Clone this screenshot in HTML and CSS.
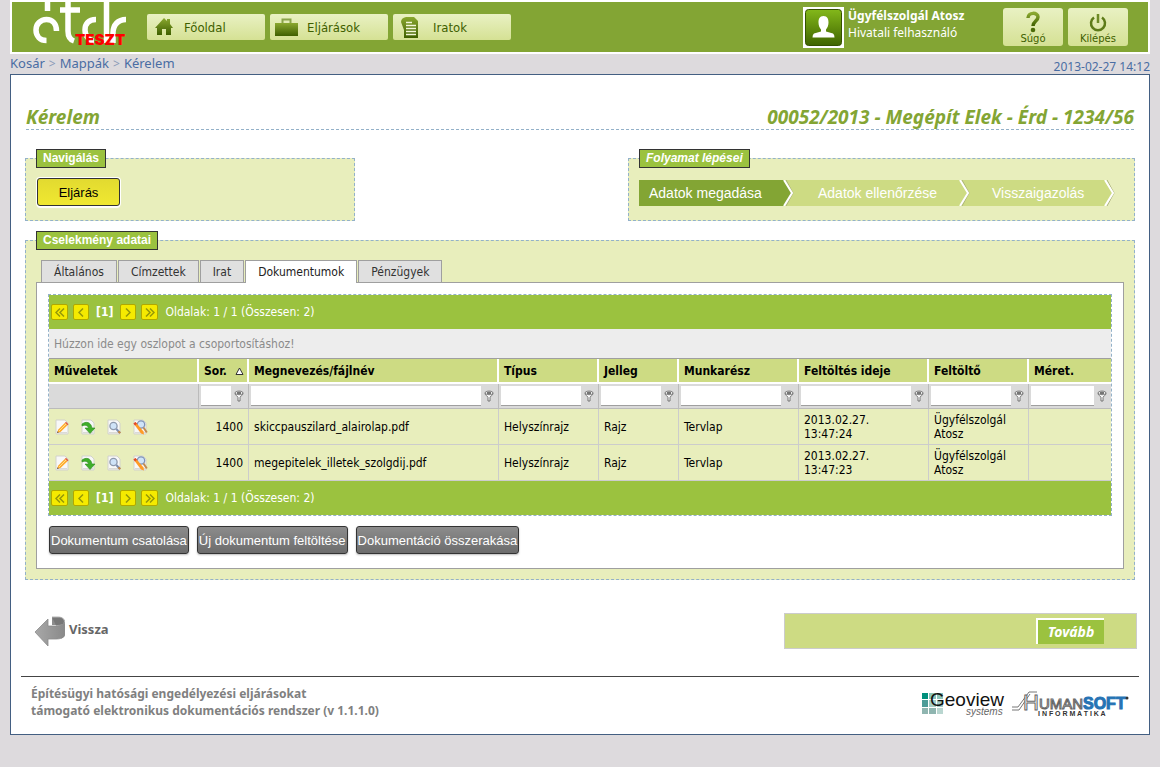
FILE: index.html
```
<!DOCTYPE html>
<html lang="hu">
<head>
<meta charset="utf-8">
<title>Kérelem</title>
<link rel="stylesheet" href="styles.css">
</head>
<body>
<svg class="defs" aria-hidden="true">
  <defs>
    <linearGradient id="leaf" x1="0" y1="0" x2="0" y2="1"><stop offset="0" stop-color="#8aa82f"/><stop offset="1" stop-color="#3f5f00"/></linearGradient>
    <linearGradient id="badge" x1="0" y1="0" x2="0" y2="1"><stop offset="0" stop-color="#83b81a"/><stop offset="1" stop-color="#3f6400"/></linearGradient>
    <linearGradient id="steel" x1="0" y1="0" x2="1" y2="0"><stop offset="0" stop-color="#a8a8a8"/><stop offset="1" stop-color="#8a8a8a"/></linearGradient>
    <symbol id="sheet" viewBox="0 0 16 16"><path d="M2 1h9l3 3v11H2z" fill="#f8f8f8" stroke="#d2d2cc"/><path d="M3 13h10v1.500H3z" fill="#dadad6"/></symbol>
    <symbol id="edit" viewBox="0 0 16 16"><use href="#sheet"/><path d="M3 14l1.300-3.500L11 3.800l2.500 2.500L6.500 13z" fill="#ffab2e"/><path d="M5 12l7-7" stroke="#ffe08a"/><path d="M11 3.800l1-1 2.500 2.500-1 1z" fill="#e05a3c"/><path d="M3 14l.6-1.800 1.200 1.200z" fill="#555"/></symbol>
    <symbol id="import" viewBox="0 0 16 16"><use href="#sheet"/><path d="M2 5c4-3 9-2 10 4h3l-5 5.500L5 9h3.500C8 6.500 5 5.500 2 7z" fill="#3fae2b" stroke="#2f8c20" stroke-width=".6"/></symbol>
    <symbol id="view" viewBox="0 0 16 16"><use href="#sheet"/><circle cx="7.500" cy="7" r="3.600" fill="#cfe3f8" stroke="#8d99ad" stroke-width="1.300"/><path d="M10.300 10l3.700 4" stroke="#7d8db0" stroke-width="2"/><path d="M12.500 12.300l1.700 1.900" stroke="#c9873a" stroke-width="2"/></symbol>
    <symbol id="review" viewBox="0 0 16 16"><use href="#sheet"/><circle cx="9" cy="5.500" r="3.700" fill="#cfe3f8" stroke="#7f93b5" stroke-width="1.300"/><path d="M11.500 8.500l3.300 5" stroke="#c08a50" stroke-width="2"/><path d="M1.500 4.500l2-1.500 8 9.500.5 3-3-1z" fill="#ff9b26"/><path d="M1.500 4.500l2-1.500 1.500 1.800-2 1.600z" fill="#e04a30"/></symbol>
    <symbol id="funnel" viewBox="0 0 10 12"><path d="M1 3.500c0 2 3 2.500 3 4V11h2V7.500c0-1.500 3-2 3-4z" fill="#fff" stroke="#666" stroke-width=".9"/><path d="M1 3c0-2.500 8-2.500 8 0s-8 2-8 0z" fill="#eee" stroke="#666" stroke-width=".9"/><path d="M3 3h4" stroke="#333" stroke-width="1.300"/></symbol>
  </defs>
</svg>

<header class="topbar">
  <a class="brand" href="#" aria-label="étdr">
    <svg class="brand-mark" width="100" height="44" viewBox="0 0 100 44" aria-hidden="true">
      <g fill="none" stroke="#fff" stroke-width="5.500">
        <path d="M17.500 0v9"/>
        <path d="M26.500 29c0-7-4-11.500-10-11.500S6 22 6 28s4 10.500 10.500 10.500"/>
        <path d="M38 0v29q0 8 6 10M30 8h20"/>
        <path d="M66 17.500c-8 0-11 5-11 10.500s4 11 9 11M76.500 0v41"/>
        <path d="M83 41V31c0-8 5-13.500 13-13.500"/>
      </g>
    </svg>
    <strong class="brand-env">TESZT</strong>
  </a>
  <nav class="menu">
    <a class="menu-item" href="#"><svg width="18" height="18" viewBox="0 0 18 18"><path d="M9 0l3 3V1h3v5l3 4h-2v7H11v-6H7v6H2v-7H0z" fill="url(#leaf)"/></svg><span>Főoldal</span></a>
    <a class="menu-item menu-wide" href="#"><svg width="23" height="18" viewBox="0 0 23 18"><path d="M0 5h23v13H0z" fill="url(#leaf)"/><path d="M7.500 5V1.500h8V5" fill="none" stroke="#8aa44a" stroke-width="2"/></svg><span>Eljárások</span></a>
    <a class="menu-item menu-doc" href="#"><svg width="18" height="21" viewBox="0 0 18 21"><path d="M5 0h8l4 4v17H3v-8L0 5q0-4 5-5z" fill="url(#leaf)"/><path d="M5 5.500h6M5 8.500h10M5 11.500h10M5 14.500h10M5 17.500h10" stroke="#f3f7d8" stroke-width="1.500"/></svg><span>Iratok</span></a>
  </nav>
  <div class="user">
    <svg class="avatar" width="41" height="41" viewBox="0 0 41 41" aria-hidden="true"><path d="M0 0h41v41H0z" fill="#fff"/><rect x="2.500" y="2.500" width="36" height="36" rx="3" fill="url(#badge)" stroke="#345200"/><path d="M20.500 9c4 0 5 3 5 6.500 0 3-1 5-2.500 7v2l7 2q1.500 1 1.500 4h-22q0-3 1.500-4l7-2v-2c-1.500-2-2.500-4-2.500-7C15.500 12 16.500 9 20.500 9z" fill="#fff"/></svg>
    <div class="user-text"><strong>Ügyfélszolgál Atosz</strong><span>Hivatali felhasználó</span></div>
  </div>
  <div class="tools">
    <a class="tool" href="#"><svg width="20" height="22" viewBox="0 0 20 22"><path d="M5 7c0-6 10-6 10-1 0 4-5 4-5 9" fill="none" stroke="url(#leaf)" stroke-width="3.500"/><circle cx="10" cy="19" r="2.300" fill="#4b6b08"/></svg><span>Súgó</span></a>
    <a class="tool" href="#"><svg width="20" height="22" viewBox="0 0 20 22"><path d="M6 6.500a7 7 0 1 0 8 0" fill="none" stroke="#5d7b18" stroke-width="2.500"/><path d="M10 3v9" stroke="#6d8a26" stroke-width="2.500"/></svg><span>Kilépés</span></a>
  </div>
</header>

<div class="trail">
  <nav class="crumbs"><a href="#">Kosár</a><i>&gt;</i><a href="#">Mappák</a><i>&gt;</i><a href="#">Kérelem</a></nav>
  <time class="clock">2013-02-27 14:12</time>
</div>

<main class="page">
  <div class="content">
    <div class="heading"><h1>Kérelem</h1><h2>00052/2013 - Megépít Elek - Érd - 1234/56</h2></div>

    <div class="pair">
      <fieldset class="group group-nav"><legend>Navigálás</legend><button class="btn btn-yellow" type="button">Eljárás</button></fieldset>
      <fieldset class="group group-steps"><legend><em>Folyamat lépései</em></legend>
        <ol class="steps">
          <li class="step step-on">Adatok megadása<svg width="11" height="26" viewBox="0 0 11 26"><path d="M0 0h1l8 13-8 13H0z" fill="#83a534"/><path d="M3 0l7 13-7 13" fill="none" stroke="#aab07c"/><path d="M1 0l8 13-8 13" fill="none" stroke="#fff" stroke-width="2"/></svg></li>
          <li class="step step-mid">Adatok ellenőrzése<svg width="11" height="26" viewBox="0 0 11 26"><path d="M3 0l7 13-7 13" fill="none" stroke="#aab07c"/><path d="M1 0l8 13-8 13" fill="none" stroke="#fff" stroke-width="2"/></svg></li>
          <li class="step step-end">Visszaigazolás<svg width="11" height="26" viewBox="0 0 11 26"><path d="M1 0h10v26H1l8-13z" fill="#e8eebc"/><path d="M3 0l7 13-7 13" fill="none" stroke="#aab07c"/><path d="M1 0l8 13-8 13" fill="none" stroke="#fff" stroke-width="2"/></svg></li>
        </ol>
      </fieldset>
    </div>

    <fieldset class="group group-main"><legend>Cselekmény adatai</legend>
      <div class="tabs" role="tablist">
        <button class="tab" type="button" role="tab">Általános</button>
        <button class="tab" type="button" role="tab">Címzettek</button>
        <button class="tab" type="button" role="tab">Irat</button>
        <button class="tab tab-on" type="button" role="tab" aria-selected="true">Dokumentumok</button>
        <button class="tab" type="button" role="tab">Pénzügyek</button>
      </div>
      <div class="pane">
        <div class="grid">
          <div class="pager">
            <button class="pg pg-wide" type="button" aria-label="Első oldal"><svg width="10" height="9" viewBox="0 0 10 9"><path d="M5 .5l-4 4 4 4M9 .5l-4 4 4 4"/></svg></button>
            <button class="pg" type="button" aria-label="Előző oldal"><svg width="6" height="9" viewBox="0 0 6 9"><path d="M5 .5l-4 4 4 4"/></svg></button>
            <strong>[1]</strong>
            <button class="pg" type="button" aria-label="Következő oldal"><svg width="6" height="9" viewBox="0 0 6 9"><path d="M1 .5l4 4-4 4"/></svg></button>
            <button class="pg pg-wide" type="button" aria-label="Utolsó oldal"><svg width="10" height="9" viewBox="0 0 10 9"><path d="M1 .5l4 4-4 4M5 .5l4 4-4 4"/></svg></button>
            <span>Oldalak: 1 / 1 (Összesen: 2)</span>
          </div>
          <div class="drop">Húzzon ide egy oszlopot a csoportosításhoz!</div>
          <table class="docs">
            <colgroup><col class="w150"><col class="w50"><col><col class="w100"><col class="w80"><col class="w120"><col class="w130"><col class="w100"><col class="w82"></colgroup>
            <thead>
              <tr class="names"><th>Műveletek</th><th><span class="sorted">Sor.<svg width="9" height="8" viewBox="0 0 9 8"><path d="M4.500 1l3.500 6.500H1z" fill="#fff" stroke="#333"/></svg></span></th><th>Megnevezés/fájlnév</th><th>Típus</th><th>Jelleg</th><th>Munkarész</th><th>Feltöltés ideje</th><th>Feltöltő</th><th>Méret.</th></tr>
              <tr class="filters">
                <td></td>
                <td><div class="filter"><input type="text" aria-label="Sor. szűrő"><button type="button" aria-label="Szűrés"><svg width="10" height="12"><use href="#funnel"/></svg></button></div></td>
                <td><div class="filter"><input type="text" aria-label="Megnevezés szűrő"><button type="button" aria-label="Szűrés"><svg width="10" height="12"><use href="#funnel"/></svg></button></div></td>
                <td><div class="filter"><input type="text" aria-label="Típus szűrő"><button type="button" aria-label="Szűrés"><svg width="10" height="12"><use href="#funnel"/></svg></button></div></td>
                <td><div class="filter"><input type="text" aria-label="Jelleg szűrő"><button type="button" aria-label="Szűrés"><svg width="10" height="12"><use href="#funnel"/></svg></button></div></td>
                <td><div class="filter"><input type="text" aria-label="Munkarész szűrő"><button type="button" aria-label="Szűrés"><svg width="10" height="12"><use href="#funnel"/></svg></button></div></td>
                <td><div class="filter"><input type="text" aria-label="Feltöltés ideje szűrő"><button type="button" aria-label="Szűrés"><svg width="10" height="12"><use href="#funnel"/></svg></button></div></td>
                <td><div class="filter"><input type="text" aria-label="Feltöltő szűrő"><button type="button" aria-label="Szűrés"><svg width="10" height="12"><use href="#funnel"/></svg></button></div></td>
                <td><div class="filter"><input type="text" aria-label="Méret szűrő"><button type="button" aria-label="Szűrés"><svg width="10" height="12"><use href="#funnel"/></svg></button></div></td>
              </tr>
            </thead>
            <tbody>
              <tr><td><div class="actions"><a href="#" aria-label="Szerkesztés"><svg width="16" height="16"><use href="#edit"/></svg></a><a href="#" aria-label="Letöltés"><svg width="16" height="16"><use href="#import"/></svg></a><a href="#" aria-label="Megtekintés"><svg width="16" height="16"><use href="#view"/></svg></a><a href="#" aria-label="Ellenőrzés"><svg width="16" height="16"><use href="#review"/></svg></a></div></td><td class="num">1400</td><td>skiccpauszilard_alairolap.pdf</td><td>Helyszínrajz</td><td>Rajz</td><td>Tervlap</td><td>2013.02.27.<br>13:47:24</td><td>Ügyfélszolgál Atosz</td><td></td></tr>
              <tr><td><div class="actions"><a href="#" aria-label="Szerkesztés"><svg width="16" height="16"><use href="#edit"/></svg></a><a href="#" aria-label="Letöltés"><svg width="16" height="16"><use href="#import"/></svg></a><a href="#" aria-label="Megtekintés"><svg width="16" height="16"><use href="#view"/></svg></a><a href="#" aria-label="Ellenőrzés"><svg width="16" height="16"><use href="#review"/></svg></a></div></td><td class="num">1400</td><td>megepitelek_illetek_szolgdij.pdf</td><td>Helyszínrajz</td><td>Rajz</td><td>Tervlap</td><td>2013.02.27.<br>13:47:23</td><td>Ügyfélszolgál Atosz</td><td></td></tr>
            </tbody>
          </table>
          <div class="pager">
            <button class="pg pg-wide" type="button" aria-label="Első oldal"><svg width="10" height="9" viewBox="0 0 10 9"><path d="M5 .5l-4 4 4 4M9 .5l-4 4 4 4"/></svg></button>
            <button class="pg" type="button" aria-label="Előző oldal"><svg width="6" height="9" viewBox="0 0 6 9"><path d="M5 .5l-4 4 4 4"/></svg></button>
            <strong>[1]</strong>
            <button class="pg" type="button" aria-label="Következő oldal"><svg width="6" height="9" viewBox="0 0 6 9"><path d="M1 .5l4 4-4 4"/></svg></button>
            <button class="pg pg-wide" type="button" aria-label="Utolsó oldal"><svg width="10" height="9" viewBox="0 0 10 9"><path d="M1 .5l4 4-4 4M5 .5l4 4-4 4"/></svg></button>
            <span>Oldalak: 1 / 1 (Összesen: 2)</span>
          </div>
        </div>
        <div class="bar">
          <button class="btn btn-gray" type="button">Dokumentum csatolása</button>
          <button class="btn btn-gray" type="button">Új dokumentum feltöltése</button>
          <button class="btn btn-gray" type="button">Dokumentáció összerakása</button>
        </div>
      </div>
    </fieldset>
  </div>

  <div class="flow">
    <a class="back" href="#"><svg width="32" height="30" viewBox="0 0 32 30"><path d="M18 1h6c4 0 7 2 7 5v13c0 2-2 3-4 3.500V9h-9z" fill="#8c8c8c"/><path d="M18 1h6c4 0 6.500 2 6.500 5S27 9.500 22 9.500" fill="#777" stroke="#b5b5b5"/><path d="M1 16L14 3v7h8c4 0 8-1 8-4v13c0 3-4 4-8 4h-8v7z" fill="url(#steel)" stroke="#8a8a8a" stroke-width=".8"/></svg><span>Vissza</span></a>
    <div class="next"><button class="btn-next" type="button">Tovább</button></div>
  </div>

  <footer class="foot">
    <p>Építésügyi hatósági engedélyezési eljárásokat<br>támogató elektronikus dokumentációs rendszer (v 1.1.1.0)</p>
    <div class="partners">
      <svg width="86" height="26" viewBox="0 0 86 26" role="img" aria-label="Geoview systems">
        <path d="M0 2h6v6H0z" fill="#00907c"/><path d="M7 2h7v6H7zM15 2h6v6h-6z" fill="#8cc4ba"/><path d="M0 9h6v7H0z" fill="#4d9c98"/><path d="M7 9h7v7H7zM15 9h6v7h-6z" fill="#a5cdc8"/><path d="M0 17h6v6H0zM7 17h7v6H7z" fill="#8fb5b0"/><path d="M15 17h6v6h-6z" fill="#b9d6d0"/>
        <text class="geo" x="8" y="15">Geoview</text><text class="geo-sub" x="44" y="24">systems</text>
      </svg>
      <svg width="118" height="26" viewBox="0 0 118 26" role="img" aria-label="HumanSoft Informatika">
        <path d="M0 19h7L18 3M0 16h6L17 1h8" fill="none" stroke="#777"/>
        <text class="human" x="11" y="19">H</text><text class="human human-s" x="27" y="18">UMAN</text><text class="soft" x="71" y="18">SOFT</text><circle cx="115" cy="7" r="1.500" fill="#333"/>
        <text class="inf" x="26" y="25">I N F O R M A T I K A</text>
      </svg>
    </div>
  </footer>
</main>
</body>
</html>
```
FILE: styles.css
```
* { box-sizing: border-box; }
body {
  margin: 0;
  padding: 0 10px;
  background: #dddadd;
  font-family: "DejaVu Sans Condensed", "DejaVu Sans", sans-serif;
  font-size: 12px;
  color: #000;
}
a { text-decoration: none; color: inherit; }
svg { display: block; flex: none; }
button { margin: 0; font: inherit; cursor: pointer; }
.defs { position: absolute; width: 0; height: 0; }

.topbar {
  display: flex;
  align-items: flex-start;
  height: 54px;
  padding: 0 20px 0 18px;
  border: 2px solid #fff;
  background: #83a534;
}
.brand { position: relative; width: 117px; }
.brand-env {
  position: absolute;
  left: 45px;
  top: 29px;
  color: #f00;
  font: 900 15px/18px Inter, "DejaVu Sans", sans-serif;
}
.menu { display: flex; gap: 5px; padding-top: 12px; }
.menu-item {
  display: flex;
  align-items: center;
  gap: 11px;
  width: 118px;
  height: 26px;
  padding-left: 8px;
  border-radius: 2px;
  background: linear-gradient(#e9f1c3, #d5e194);
  color: #3f5f00;
  font-size: 13px;
}
.menu-wide { padding-left: 5px; gap: 9px; }
.menu-doc { gap: 14px; }
.user { display: flex; gap: 4px; margin-left: auto; padding-top: 5px; color: #fff; font: 12px/17px "Noto Sans", sans-serif; }
.user-text { display: flex; flex-direction: column; min-width: 121px; }
.tools { display: flex; gap: 5px; margin-left: 34px; padding-top: 6px; }
.tool {
  display: flex;
  flex-direction: column;
  align-items: center;
  width: 60px;
  height: 38px;
  padding-top: 3px;
  border-radius: 3px;
  background: linear-gradient(#e9f1c3, #d5e194);
  color: #3f5f00;
  font: 10px/12px "DejaVu Sans", sans-serif;
}

.trail { display: flex; justify-content: space-between; height: 20px; color: #4a6da3; font: 13px/19px "Noto Sans", sans-serif; }
.crumbs i { margin: 0 4px; color: #8a9ab8; font-style: normal; font-size: 12px; }
.clock { padding-top: 3px; font-size: 12px; }

.page { padding: 30px 10px 15px; border: 1px solid #435f82; background: #fff; }
.content { padding: 0 4px; }
.heading {
  display: flex;
  justify-content: space-between;
  margin: 0 1px 19px;
  border-bottom: 1px dashed #93b1c9;
}
.heading h1, .heading h2 { margin: 0; color: #83a534; font: italic bold 19px/24px "Noto Sans", sans-serif; }

.pair { display: flex; justify-content: space-between; margin-bottom: 10px; }
.group { min-width: 0; margin: 0; padding: 10px; border: 1px dashed #93b1c9; background: #e8eebc; }
.group legend {
  height: 19px;
  padding: 0 6px;
  border: 1px solid #333;
  background: #9bc23f;
  color: #fff;
  font: bold 12px/17px "Liberation Sans", sans-serif;
}
.group-nav { width: 330px; padding-bottom: 14px; }
.group-steps { width: 507px; padding: 12px 10px; }
.btn { display: inline-flex; align-items: center; justify-content: center; height: 28px; border: 1px solid #333; border-radius: 3px; }
.btn-yellow {
  display: flex;
  width: 83px;
  margin-left: 1px;
  background: linear-gradient(#e2da30, #f0e830);
  box-shadow: 0 2px 1px #fff, 0 0 0 1px #fff;
  font: 13px/15px "Liberation Sans", sans-serif;
}
.steps { display: flex; margin: 0; padding: 0; list-style: none; font: 14px/26px "Liberation Sans", sans-serif; }
.step { display: flex; justify-content: space-between; padding-left: 24px; background: #cddb83; color: #fff; white-space: nowrap; }
.step-on { width: 155px; padding-left: 10px; background: #83a534; }
.step-on svg { background: #cddb83; }
.step-mid { width: 176px; }
.step-end { width: 145px; padding-left: 22px; }

.tabs { display: flex; gap: 1px; padding-left: 5px; }
.tab { height: 22px; padding: 0 12px; border: 1px solid #9f9f9f; border-bottom: 0; background: #e0e0e0; color: #333; }
.tab-on { position: relative; height: 23px; margin-bottom: -1px; background: #fff; color: #222; }
.pane { padding: 11px 11px 14px; border: 1px solid #9f9f9f; background: #fff; }

.grid { margin-bottom: 10px; border: 1px dashed #93b1c9; }
.pager { display: flex; align-items: center; gap: 5px; height: 34px; padding-left: 2px; background: #9bc23f; color: #fff; }
.pager strong { margin: 0 2px; }
.pager span { margin-left: 2px; }
.pg { display: flex; align-items: center; justify-content: center; width: 16px; height: 16px; padding: 0; border: 1px solid #b0a800; border-radius: 2px; background: #f5ea00; }
.pg-wide { width: 17px; }
.pg svg { fill: none; stroke: #94980a; stroke-width: 1.5; }
.drop { height: 30px; padding-left: 5px; border-bottom: 1px solid #9f9f9f; background: #ededed; color: #8b8b8b; line-height: 30px; }

.docs { width: 100%; table-layout: fixed; border-spacing: 0; }
.w50 { width: 50px; }
.w80 { width: 80px; }
.w82 { width: 82px; }
.w100 { width: 100px; }
.w120 { width: 120px; }
.w130 { width: 130px; }
.w150 { width: 150px; }
.names th { height: 25px; padding: 0 5px; border-right: 2px solid #fff; border-bottom: 2px solid #fff; background: #cddb83; text-align: left; white-space: nowrap; }
.names th:last-child { border-right: 0; }
.sorted { display: flex; align-items: center; justify-content: space-between; margin-right: -2px; }
.filters td { height: 25px; padding: 2px; border-right: 1px solid #bbb; border-bottom: 1px solid #bbb; background: #dadada; }
.filter { display: flex; align-items: center; gap: 3px; padding-right: 2px; }
.filter input { flex: 1; min-width: 0; height: 20px; padding: 0 2px; border: 0; border-bottom: 1px solid #9f9f9f; background: #fff; font: inherit; }
.filter button { padding: 0; border: 0; background: none; }
tbody td { height: 36px; padding: 0 5px; border-right: 1px solid #ccc; border-bottom: 1px solid #ccc; background: #e8eebc; line-height: 14px; }
.docs td:last-child { border-right: 0; }
.docs .num { text-align: right; }
.actions { display: flex; gap: 10px; }

.bar { display: flex; gap: 8px; padding-left: 1px; }
.btn-gray { padding: 0 1px; background: linear-gradient(#8c8c8c, #6c6c6c); box-shadow: 0 1px 2px #bbb; color: #fff; font: 13px/15px "Liberation Sans", sans-serif; }

.flow { display: flex; justify-content: space-between; margin: 33px 2px 27px 13px; }
.back { display: flex; align-items: center; gap: 3px; color: #666; font: bold 13px/17px "Noto Sans", sans-serif; }
.back span { padding-bottom: 4px; }
.next { display: flex; align-items: center; justify-content: flex-end; width: 353px; height: 36px; padding-right: 32px; border: 1px solid #ccc; background: #cddb83; }
.btn-next { width: 68px; height: 26px; padding: 0; border: 0 solid #fff; border-width: 2px 0 0 2px; background: #9bc23f; color: #fff; font: italic bold 14px/20px "Noto Sans", sans-serif; }

.foot { display: flex; justify-content: space-between; padding: 8px 9px 0 10px; border-top: 1px solid #444; }
.foot p { margin: 0; color: #808080; font: bold 12px/17px "Noto Sans", sans-serif; }
.partners { display: flex; gap: 4px; padding-top: 6px; }
.geo { font: 19px "Liberation Sans", sans-serif; fill: #111; }
.geo-sub { font: italic 10px "Liberation Sans", sans-serif; fill: #666; }
.human { font: 22px "Liberation Sans", sans-serif; fill: #fff; stroke: #666; stroke-width: 1; }
.human-s { font-size: 15px; }
.soft { font: bold 16px "Liberation Sans", sans-serif; fill: #2673b4; stroke: #2673b4; stroke-width: 1; }
.inf { font: bold 7px "Liberation Sans", sans-serif; fill: #333; }
```
